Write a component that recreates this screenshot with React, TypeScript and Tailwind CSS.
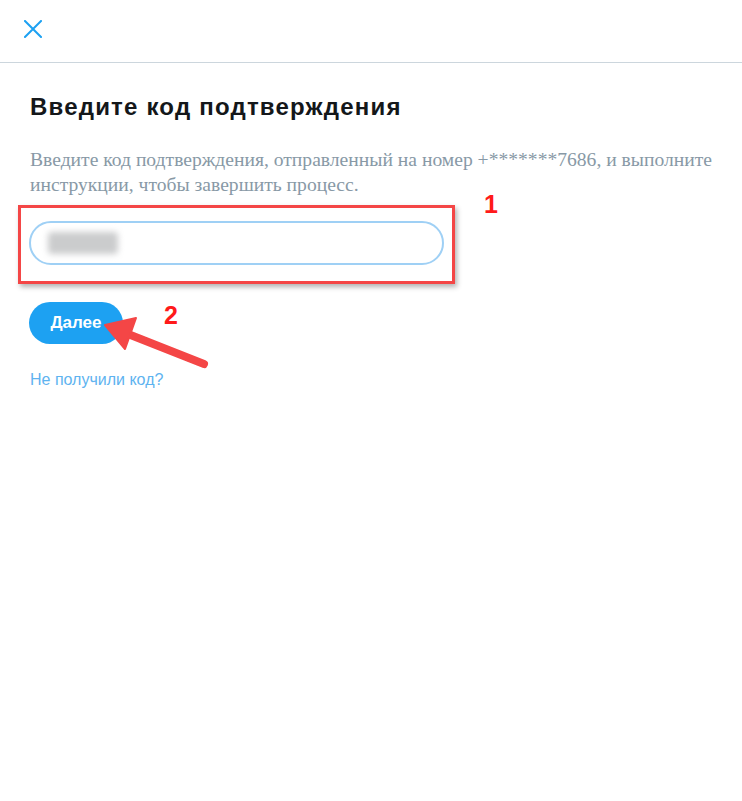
import React from "react";

export default function App() {
  return (
    <div className="relative w-[742px] h-[801px] bg-white overflow-hidden" style={{ fontFamily: '"Liberation Sans", Arial, sans-serif' }}>
      <div className="h-[63px] border-b border-[#ccd6dd] flex items-center pl-[24px]">
        <svg width="18" height="18" viewBox="0 0 18 18" className="mb-[4px]">
          <path d="M1 1 L17 17 M17 1 L1 17" stroke="#1da1f2" strokeWidth="2" strokeLinecap="square" />
        </svg>
      </div>

      <div className="pl-[30px] pr-[20px]">
        <h1 className="mt-[30px] text-[24px] leading-[28px] font-bold text-[#14171a] tracking-[1.2px]">
          Введите код подтверждения
        </h1>
        <div className="mt-[26px] text-[19.6px] leading-[25px] text-[#8899a6]" style={{ fontFamily: '"Liberation Serif", "Times New Roman", serif' }}>
          <p className="w-fit whitespace-nowrap">Введите код подтверждения, отправленный на номер +*******7686, и выполните</p>
          <p className="w-fit whitespace-nowrap">инструкции, чтобы завершить процесс.</p>
        </div>
      </div>

      <div className="ml-[18px] mt-[8px] w-[437px] h-[79px] border-[3px] border-[#f44646] shadow-[2px_3px_5px_rgba(0,0,0,0.3)] pt-[13px] pl-[8px]">
        <div className="w-[415px] h-[44px] rounded-full border-2 border-[#9fd0f5] flex items-center pl-[17px]">
          <div className="w-[70px] h-[22px] bg-[#cbcccd] blur-[3px] rounded-sm" />
        </div>
      </div>

      <button className="ml-[29px] mt-[18px] w-[94px] h-[42px] rounded-full bg-[#1da1f2] text-white font-bold text-[17px] flex items-center justify-center">
        Далее
      </button>

      <div className="ml-[30px] mt-[27px] text-[16px] leading-[18px] text-[#5eb3f0]">
        Не получили код?
      </div>

      <div className="absolute left-[484px] top-[192px] text-[25px] font-bold text-[#ff1a1a] leading-none">1</div>
      <div className="absolute left-[164px] top-[303px] text-[25px] font-bold text-[#ff1a1a] leading-none">2</div>

      <svg className="absolute left-0 top-0" width="742" height="801" viewBox="0 0 742 801" style={{ pointerEvents: "none" }}>
        <line x1="204" y1="364" x2="128" y2="334" stroke="#f44646" strokeWidth="8" strokeLinecap="round" />
        <polygon points="105,325 136,318 125,349" fill="#f44646" stroke="#f44646" strokeWidth="2" strokeLinejoin="round" />
      </svg>
    </div>
  );
}
